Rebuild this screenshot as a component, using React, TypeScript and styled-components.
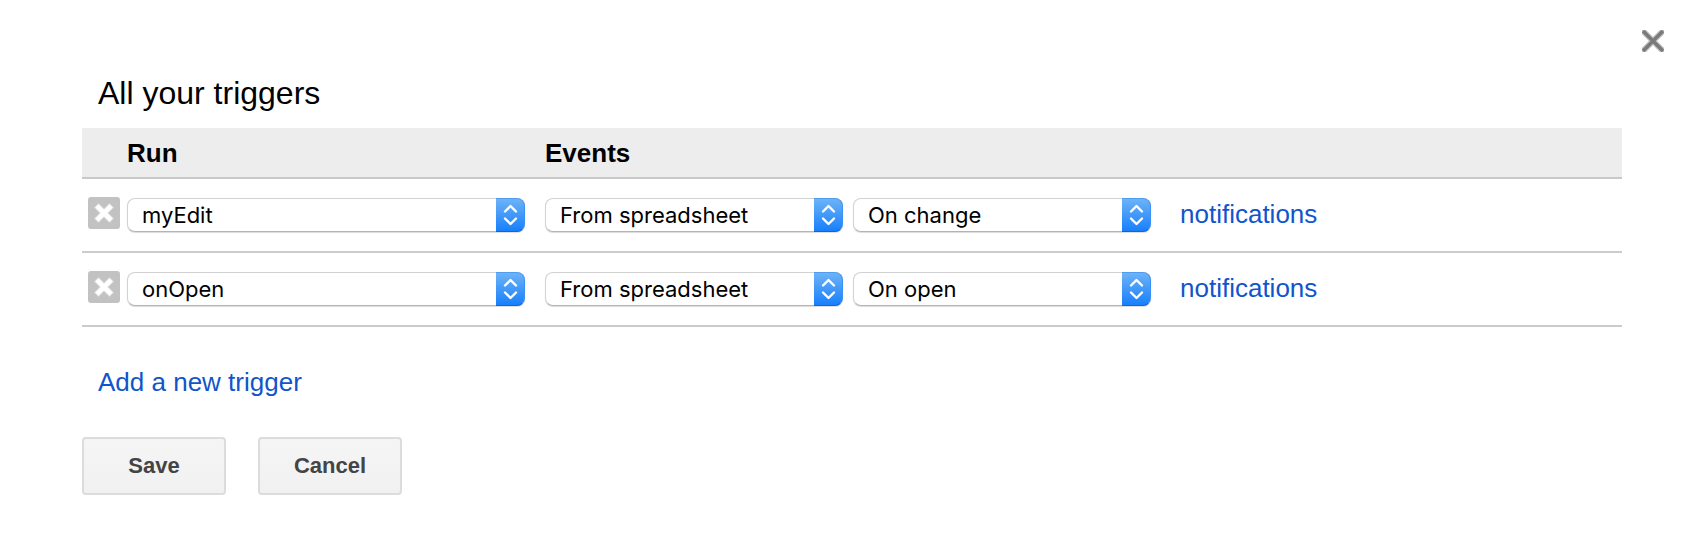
import React, { useState } from "react";
import styled, { createGlobalStyle } from "styled-components";

const GlobalStyle = createGlobalStyle`
  * { box-sizing: border-box; }
  body {
    margin: 0;
    background: #fff;
    color: #000;
    font-family: "Liberation Sans", Arial, sans-serif;
    font-size: 26px;
    line-height: 30px;
  }
`;

const Dialog = styled.section`
  display: flex;
  flex-direction: column;
`;

const TopBar = styled.div`
  display: flex;
  justify-content: flex-end;
  padding: 30px 36px 0 0;
`;

const IconButton = styled.button<{ $size: number }>`
  display: block;
  width: ${(p) => p.$size}px;
  height: ${(p) => p.$size}px;
  padding: 0;
  border: 0;
  background: none;
  cursor: pointer;

  svg { display: block; }
`;

const Content = styled.div`
  padding: 23px 78px 40px 82px;
`;

const Title = styled.h1`
  margin: 0 0 17px;
  padding-left: 16px;
  font-size: 32px;
  font-weight: 400;
  line-height: 36px;
`;

const TriggerTable = styled.table`
  width: 100%;
  border-collapse: separate;
  border-spacing: 0;
  table-layout: fixed;
`;

const HeadCell = styled.th<{ $width?: number }>`
  width: ${(p) => (p.$width ? `${p.$width}px` : "auto")};
  padding: 10px 0 9px;
  border-bottom: 2px solid #c9c9c9;
  background: #ededed;
  font-weight: 700;
  text-align: left;
`;

const Cell = styled.td`
  height: 74px;
  padding: 19px 0 0;
  border-bottom: 2px solid #cbcbcb;
  vertical-align: top;
`;

const DeleteCell = styled(Cell)`
  padding: 18px 0 0 6px;
`;

const EventFields = styled.div`
  display: flex;
  align-items: flex-start;
  gap: 10px;
`;

const SelectBox = styled.div<{ $width: number }>`
  position: relative;
  width: ${(p) => p.$width}px;
  height: 34px;
`;

const Select = styled.select`
  appearance: none;
  display: block;
  width: 100%;
  height: 34px;
  padding: 0 40px 0 14px;
  border: 1px solid #d2d2d2;
  border-bottom-color: #b4b4b4;
  border-radius: 8px;
  background: #fff;
  box-shadow: 0 1px 1px rgba(0, 0, 0, 0.14);
  color: #000;
  font-family: Inter, "Liberation Sans", sans-serif;
  font-size: 22px;
  line-height: 32px;
`;

const Stepper = styled.span`
  position: absolute;
  top: 0;
  right: 0;
  width: 29px;
  height: 34px;
  border: solid;
  border-width: 1px 1px 1px 0;
  border-color: #4f9df0 #3a90f6 #0b62ee;
  border-radius: 0 8px 8px 0;
  background: linear-gradient(#6fb4f8, #157efb);
  background-origin: border-box;
  pointer-events: none;

  svg { display: block; }
`;

const Link = styled.a`
  color: #1155cc;
  text-decoration: none;
`;

const NotificationsLink = styled(Link)`
  margin-left: 19px;
  line-height: 32px;
`;

const AddRow = styled.div`
  padding: 40px 16px;
`;

const Actions = styled.div`
  display: flex;
  gap: 32px;
`;

const ActionButton = styled.button`
  min-width: 144px;
  height: 58px;
  padding: 0 16px;
  border: 2px solid #dcdcdc;
  border-radius: 4px;
  background: linear-gradient(#f5f5f5, #f1f1f1);
  color: #444;
  font-family: inherit;
  font-size: 22px;
  font-weight: 700;
  line-height: 26px;
  cursor: pointer;
`;

const CloseIcon = () => (
  <svg width="22" height="22" viewBox="0 0 22 22" aria-hidden="true">
    <path d="M0 0L22 22M22 0L0 22" stroke="#c4c4c4" strokeWidth="6" />
    <path d="M1 1L21 21M21 1L1 21" stroke="#7a7a7a" strokeWidth="3.6" />
  </svg>
);

const DeleteIcon = () => (
  <svg width="32" height="32" viewBox="0 0 32 32" aria-hidden="true">
    <rect width="32" height="32" rx="3" fill="#c2c2c2" />
    <path d="M10.5 10.5L21.5 21.5M21.5 10.5L10.5 21.5" stroke="#dcdcdc" strokeWidth="6.4" strokeLinecap="square" />
    <path d="M10.5 10.5L21.5 21.5M21.5 10.5L10.5 21.5" stroke="#fff" strokeWidth="4.6" strokeLinecap="square" />
  </svg>
);

const StepperIcon = () => (
  <svg width="28" height="32" viewBox="0 0 28 32" fill="none" aria-hidden="true">
    <path
      d="M9 12.5L14.5 7L20 12.5M9 19.5L14.5 25L20 19.5"
      stroke="#fff"
      strokeWidth="2.4"
      strokeLinecap="round"
      strokeLinejoin="round"
    />
  </svg>
);

interface DropDownProps {
  label: string;
  width: number;
  value: string;
  options: string[];
}

function DropDown({ label, width, value, options }: DropDownProps) {
  return (
    <SelectBox $width={width}>
      <Select aria-label={label} defaultValue={value}>
        {options.map((option) => (
          <option key={option}>{option}</option>
        ))}
      </Select>
      <Stepper>
        <StepperIcon />
      </Stepper>
    </SelectBox>
  );
}

const initialTriggers = [
  { run: "myEdit", event: "On change" },
  { run: "onOpen", event: "On open" },
];

export default function App() {
  const [triggers, setTriggers] = useState(initialTriggers);

  return (
    <>
      <GlobalStyle />
      <Dialog role="dialog" aria-labelledby="triggers-title">
        <TopBar>
          <IconButton $size={22} type="button" aria-label="Close">
            <CloseIcon />
          </IconButton>
        </TopBar>
        <Content>
          <Title id="triggers-title">All your triggers</Title>
          <TriggerTable>
            <thead>
              <tr>
                <HeadCell $width={45} aria-label="Delete" />
                <HeadCell $width={418} scope="col">Run</HeadCell>
                <HeadCell scope="col">Events</HeadCell>
              </tr>
            </thead>
            <tbody>
              {triggers.map((trigger) => (
                <tr key={trigger.run}>
                  <DeleteCell>
                    <IconButton
                      $size={32}
                      type="button"
                      aria-label={`Delete ${trigger.run}`}
                      onClick={() => setTriggers(triggers.filter((t) => t !== trigger))}
                    >
                      <DeleteIcon />
                    </IconButton>
                  </DeleteCell>
                  <Cell>
                    <DropDown label="Run" width={398} value={trigger.run} options={["myEdit", "onOpen"]} />
                  </Cell>
                  <Cell>
                    <EventFields>
                      <DropDown
                        label="Event source"
                        width={298}
                        value="From spreadsheet"
                        options={["From spreadsheet"]}
                      />
                      <DropDown
                        label="Event type"
                        width={298}
                        value={trigger.event}
                        options={["On open", "On change"]}
                      />
                      <NotificationsLink href="#notifications">notifications</NotificationsLink>
                    </EventFields>
                  </Cell>
                </tr>
              ))}
            </tbody>
          </TriggerTable>
          <AddRow>
            <Link href="#add">Add a new trigger</Link>
          </AddRow>
          <Actions>
            <ActionButton type="button">Save</ActionButton>
            <ActionButton type="button">Cancel</ActionButton>
          </Actions>
        </Content>
      </Dialog>
    </>
  );
}
